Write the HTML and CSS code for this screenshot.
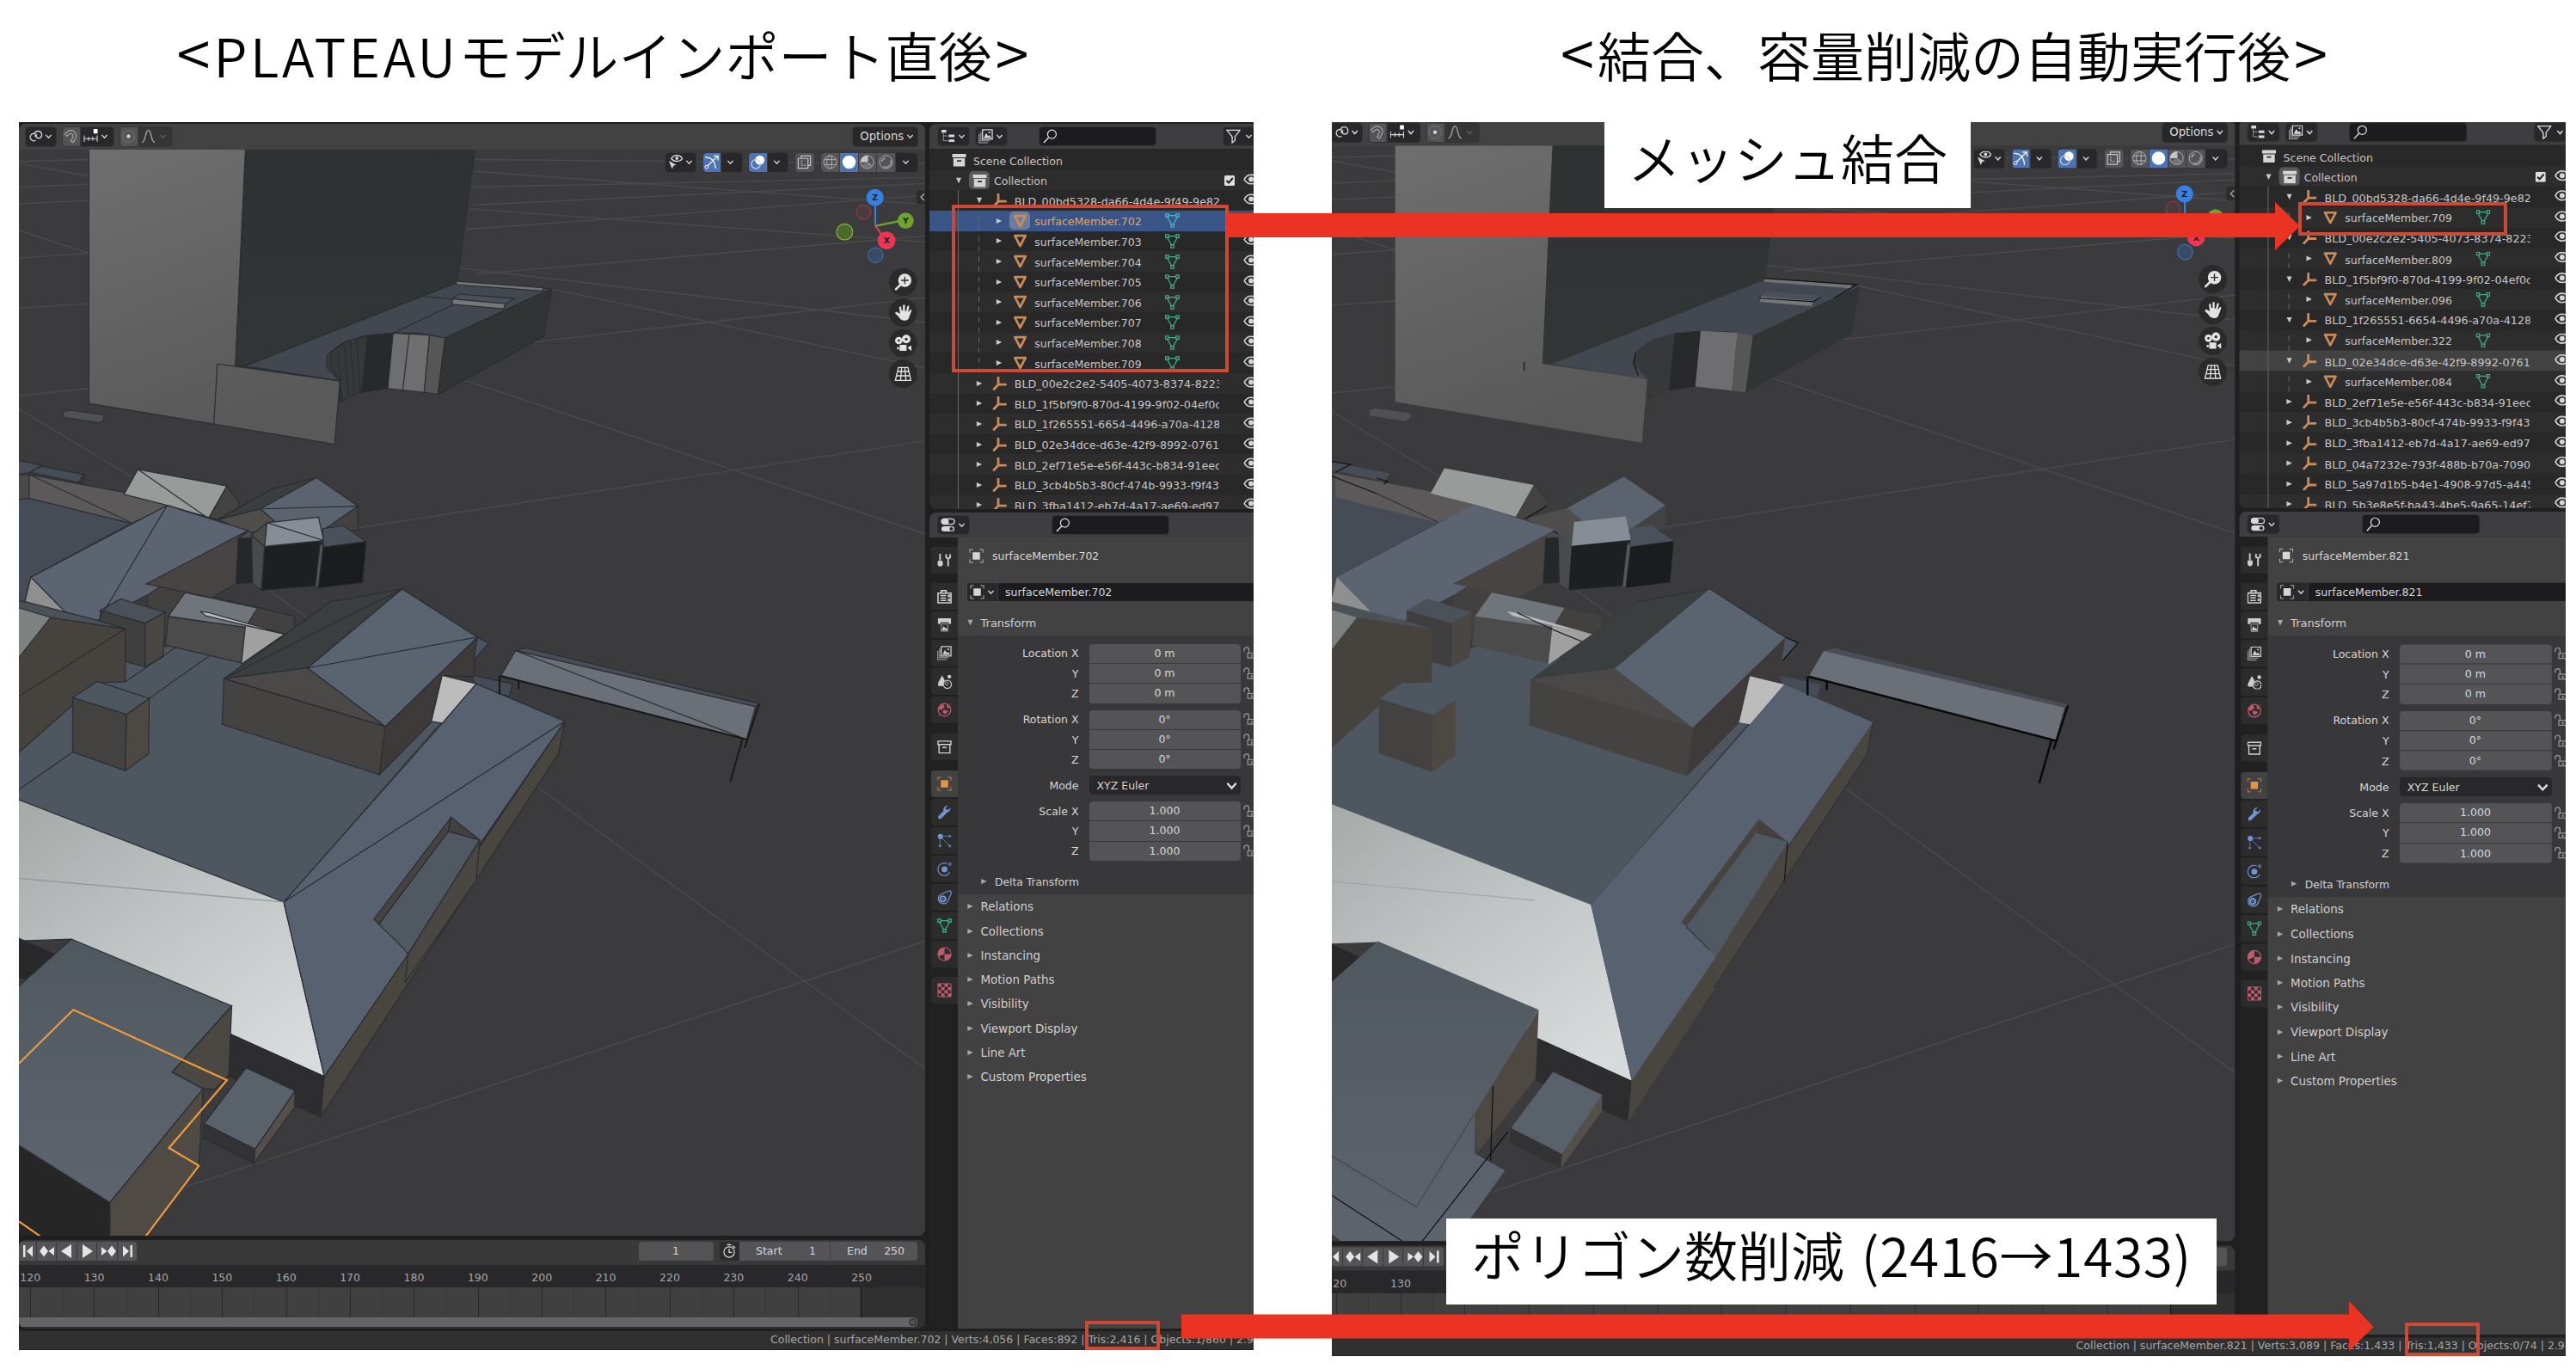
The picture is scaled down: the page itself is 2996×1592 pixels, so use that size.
FILE: index.html
```html
<!DOCTYPE html>
<html lang="ja">
<head>
<meta charset="utf-8">
<title>PLATEAUモデル 結合・容量削減</title>
<link rel="stylesheet" href="styles.css">
</head>
<body>
<svg class="defs" aria-hidden="true">
  <defs>
    <linearGradient id="gTower" x1="0" y1="0" x2="0.3" y2="1"><stop offset="0" stop-color="#6f6f70"/><stop offset="1" stop-color="#595959"/></linearGradient>
    <linearGradient id="gDark" x1="0" y1="0" x2="0" y2="1"><stop offset="0" stop-color="#2d3132"/><stop offset="1" stop-color="#323637"/></linearGradient>
    <linearGradient id="gWhite" x1="0" y1="0" x2="0.8" y2="1"><stop offset="0" stop-color="#a3a7a6"/><stop offset="0.5" stop-color="#bfc3c3"/><stop offset="1" stop-color="#d8dbdc"/></linearGradient>
    <linearGradient id="gBld" x1="0" y1="0" x2="0" y2="1"><stop offset="0" stop-color="#50585f"/><stop offset="1" stop-color="#5d646e"/></linearGradient>

    <symbol id="chev" viewBox="0 0 10 10"><path d="M1.5 3.2 5 7l3.500-3.800" fill="none" stroke="currentColor" stroke-width="1.600"/></symbol>
    <symbol id="right" viewBox="0 0 10 10"><path d="M1 1.200 9 5 1 8.800z" fill="currentColor"/></symbol>
    <symbol id="down" viewBox="0 0 10 10"><path d="M1.200 1h7.600L5 9z" fill="currentColor"/></symbol>
    <symbol id="box" viewBox="0 0 16 16"><path d="M0 1h16v4H0zM1.300 6h13.400v9.500H1.300z" fill="currentColor"/><path d="M5.500 8.200h5v1.800h-5z" fill="#2b2b2b"/></symbol>
    <symbol id="empty" viewBox="0 0 16 16"><path d="M6.500 1v8.200H15M6.500 9.200 1.500 14.500" fill="none" stroke="#c98b57" stroke-width="2.800" stroke-linecap="round"/></symbol>
    <symbol id="mesh" viewBox="0 0 16 16"><path d="M1.800 2.200h12.400L8 14z" fill="none" stroke="#c98b57" stroke-width="2.700" stroke-linejoin="round"/></symbol>
    <symbol id="data" viewBox="0 0 16 16"><path d="M4 2.500h8M2.500 4l4.500 8M13.500 4 9 12M.7.800h3.200V4H.7zM12.100.800h3.200V4h-3.200zM6.400 12h3.200v3.200H6.400z" fill="none" stroke="currentColor" stroke-width="1.200"/></symbol>
    <symbol id="eye" viewBox="0 0 16 12"><path d="M.8 6C4-.5 12-.5 15.200 6 12 12.500 4 12.500.8 6z" fill="none" stroke="currentColor" stroke-width="1.500"/><circle cx="8" cy="6" r="2.700" fill="currentColor"/></symbol>
    <symbol id="check" viewBox="0 0 12 12"><rect width="12" height="12" rx="1.500" fill="#dedede"/><path d="M2.500 6 5 8.600 9.800 3" fill="none" stroke="#1c1c1c" stroke-width="2"/></symbol>
    <symbol id="tree" viewBox="0 0 18 18"><path d="M1 1h6v3.500H1zM10 7h7v3h-7zM10 13h7v3h-7z" fill="currentColor"/><path d="M3.500 5v9.500H9M3.500 8.500H9" fill="none" stroke="#9a9a9a"/></symbol>
    <symbol id="layers" viewBox="0 0 18 18"><path d="M5 1h12v11.500H5z" fill="none" stroke="currentColor" stroke-width="1.400"/><path d="M6.500 11l3-6 2.500 4 1.500-1.500 2.500 3.500zM12.500 3.200h2v2h-2z" fill="currentColor"/><path d="M3 3.500v11h11M.8 6v11h11" fill="none" stroke="#a8a8a8" stroke-width="1.200"/></symbol>
    <symbol id="search" viewBox="0 0 18 18"><circle cx="11" cy="6.500" r="5.300" fill="none" stroke="currentColor" stroke-width="1.300"/><path d="M7 10.500 1 17" stroke="currentColor" stroke-width="1.500"/></symbol>
    <symbol id="funnel" viewBox="0 0 18 18"><path d="M1 1.500h16L11 9.500v4.500l-3.500 3V9.500z" fill="none" stroke="currentColor" stroke-width="1.400"/></symbol>
    <symbol id="props" viewBox="0 0 18 18"><rect x="1" y="1.500" width="16" height="6.500" rx="3.200" fill="none" stroke="currentColor" stroke-width="1.300"/><rect x="1" y="1.500" width="9" height="6.500" rx="3" fill="currentColor"/><rect x="1" y="10.500" width="16" height="6.500" rx="3.200" fill="currentColor"/><rect x="11" y="11.700" width="4.500" height="4.200" rx="2" fill="#2b2b2b"/></symbol>
    <symbol id="object" viewBox="0 0 18 18"><path d="M4.500 4.500h9v9h-9z" fill="currentColor"/><path d="M1 5V1h4M13 1h4v4M17 13v4h-4M5 17H1v-4" fill="none" stroke="currentColor" stroke-width="1.100" opacity=".75"/></symbol>
    <symbol id="lock" viewBox="0 0 16 16"><path d="M1 6V4a3 3 0 0 1 6 0v4" fill="none" stroke="currentColor" stroke-width="1.300"/><path d="M5.500 8h10v6h-10z" fill="none" stroke="currentColor" stroke-width="1.300"/><path d="M9.500 10h2v2.500h-2z" fill="currentColor"/></symbol>

    <symbol id="pivot" viewBox="0 0 18 18"><path d="M10.500 8.500A4.500 4.500 0 1 0 9 15M7.500 7.500A4.500 4.500 0 1 1 13 12.500 4.500 4.500 0 0 1 9 9.500" transform="translate(0 -1)" fill="none" stroke="currentColor" stroke-width="1.400"/><circle cx="9" cy="8.500" r="1.400" fill="currentColor"/></symbol>
    <symbol id="magnet" viewBox="0 0 18 18"><path d="M1.500 6 6 2.500C12 0 17 5 15 10.500L12 16.500 9 15l2.500-5.500C12.500 6.500 10 5 7 6L4 9z" fill="none" stroke="currentColor" stroke-width="1.200"/></symbol>
    <symbol id="snap" viewBox="0 0 18 18"><path d="M1 8v8M17 8v8M6.500 9.500v5M11.500 9.500v5M1 12h16" stroke="currentColor" stroke-width="1.100"/><path d="M12.500 0h5v5.500h-5z" fill="#fff"/></symbol>
    <symbol id="prop" viewBox="0 0 18 18"><circle cx="9" cy="9" r="7.500" fill="none" stroke="#777"/><circle cx="9" cy="9" r="2.300" fill="#cfcfcf"/></symbol>
    <symbol id="bell" viewBox="0 0 18 18"><path d="M1 16.500c5 0 4-15 8-15s3 15 8 15" fill="none" stroke="#aaa" stroke-width="1.400"/></symbol>
    <symbol id="pickeye" viewBox="0 0 18 18"><path d="M4 4.500C7-.5 15-.5 17.500 4.500 15 9 7 9 4 4.500z" fill="none" stroke="currentColor" stroke-width="1.500"/><circle cx="10.800" cy="4.300" r="2" fill="currentColor"/><path d="M1 7.500 10 12.500 6.500 13.500 5 17.500z" fill="currentColor"/></symbol>
    <symbol id="giz" viewBox="0 0 18 18"><path d="M1 3c8 0 12.500 5 13 14M4 14 16 2M11.500 1.500H17V7" fill="none" stroke="#fff" stroke-width="1.300"/><circle cx="3" cy="15" r="2" fill="#4f74b4" stroke="#fff"/></symbol>
    <symbol id="over" viewBox="0 0 18 18"><circle cx="11.300" cy="6.500" r="5.700" fill="#fff"/><circle cx="6.500" cy="11.500" r="5.500" fill="none" stroke="#c4d3ee" stroke-width="1.300"/></symbol>
    <symbol id="xray" viewBox="0 0 18 18"><path d="M1.500 4.500h12v12h-12zM5 4V1.500h11.500V13H14" fill="none" stroke="#c4c4c4" stroke-width="1.300"/><path d="M5.500 7v6h5" fill="none" stroke="#c4c4c4" stroke-dasharray="2 1"/></symbol>
    <symbol id="sWire" viewBox="0 0 18 18"><circle cx="9" cy="9" r="8" fill="none" stroke="#b5b5b5"/><path d="M11 1v16M1.500 6h15M1.500 12h15M9 1C3.500 5 3.500 13 9 17" fill="none" stroke="#b5b5b5"/></symbol>
    <symbol id="sSolid" viewBox="0 0 18 18"><circle cx="9" cy="9" r="8.200" fill="#fff"/></symbol>
    <symbol id="sMat" viewBox="0 0 18 18"><circle cx="9" cy="9" r="8" fill="none" stroke="#b5b5b5"/><path d="M10 1v8l5.500 5A8 8 0 0 1 10 9H1A8 8 0 0 1 10 1z" fill="#c4c4c4"/><path d="M9 9 15 15A8 8 0 0 1 2 13z" fill="#8a8a8a" opacity=".6"/></symbol>
    <symbol id="sRend" viewBox="0 0 18 18"><circle cx="9" cy="9" r="8" fill="none" stroke="#b5b5b5"/><path d="M14.500 7A6 6 0 0 1 6 14.500" fill="none" stroke="#a8a8a8" stroke-width="2" stroke-dasharray="1.500 .7"/><path d="M4 8.500a5 5 0 0 1 4-4.500" stroke="#ddd" fill="none"/></symbol>
    <symbol id="clock" viewBox="0 0 18 18"><circle cx="8.500" cy="10.500" r="6.500" fill="none" stroke="currentColor" stroke-width="1.300"/><path d="M8.500 6.500v4.500H12M6 1.500h5M13 3l3 2.500" fill="none" stroke="currentColor" stroke-width="1.500"/></symbol>

    <symbol id="tTool" viewBox="0 0 18 18"><path d="M3.500 1v8M11 1.500v4l2.500 1.500L16 5.500v-4M13.500 7v9.500" fill="none" stroke="currentColor" stroke-width="2"/><path d="M1 9.500h5.500L7 14a3.300 3.300 0 0 1-6.500 0z" fill="currentColor"/></symbol>
    <symbol id="tRender" viewBox="0 0 18 18"><path d="M1 5h16v12H1zM5 5V2h6v3" fill="none" stroke="currentColor" stroke-width="1.700"/><path d="M4 8h7M4 11h7M4 14h7" stroke="currentColor" stroke-width="1.600"/><path d="M13 7h3v3h-3zM13 12h3v3h-3z" fill="currentColor"/></symbol>
    <symbol id="tOut" viewBox="0 0 18 18"><path d="M1 1h16v7h-3V6H4v2H1z" fill="currentColor"/><path d="M5 8h8v9H5z" fill="none" stroke="#aaa"/><path d="M5.500 16 8 10.500l2 3 1-1 2 3.500z" fill="currentColor"/></symbol>
    <symbol id="tScene" viewBox="0 0 18 18"><path d="M6 1.500 9 7v7.500H1.500Q0 12 2 9z" fill="currentColor"/><circle cx="15" cy="3" r="2.300" fill="currentColor"/><circle cx="12.500" cy="12.500" r="5" fill="#2b2b2b" stroke="currentColor" stroke-width="1.300"/><circle cx="11.500" cy="11.500" r="2" fill="none" stroke="currentColor" stroke-width=".8"/></symbol>
    <symbol id="tWorld" viewBox="0 0 18 18"><circle cx="9" cy="9" r="7.700" fill="none" stroke="currentColor" stroke-width="1.300"/><path d="M3 4.500 7 2l2 3-3 3-1 1-3-1zM8 9l5 1.500-1.500 2.500-2 1-2.500-2zM12 3l3.500 3-3 1zM1 17l2-2M15 3l2-2" fill="currentColor" stroke="currentColor" stroke-width=".7"/></symbol>
    <symbol id="tColl" viewBox="0 0 18 18"><path d="M1 2h16v4H1zM2.300 6h13.400v10.500H2.300z" fill="none" stroke="currentColor" stroke-width="1.500"/><path d="M6.500 9h5v1.700h-5z" fill="currentColor"/></symbol>
    <symbol id="tMod" viewBox="0 0 18 18"><path d="M3.500 15 11 7.500" stroke="currentColor" stroke-width="4.500" stroke-linecap="round"/><path d="M16.500 3.500 13 7l-2.500-.5L10 4l3.500-3.200A5.500 5.500 0 0 0 8 8.500 5.500 5.500 0 0 0 16.500 3.500z" fill="currentColor"/></symbol>
    <symbol id="tPart" viewBox="0 0 18 18"><circle cx="4" cy="4" r="3.300" fill="currentColor"/><path d="M8 3.500h6M3.500 8v6M7 7l8 8" stroke="currentColor" stroke-width="1" opacity=".8"/><g fill="currentColor" opacity=".75"><circle cx="15.500" cy="3.500" r="1.700"/><circle cx="3.500" cy="15.500" r="1.700"/><circle cx="15.500" cy="15.500" r="1.700"/></g></symbol>
    <symbol id="tPhys" viewBox="0 0 18 18"><circle cx="9" cy="9.500" r="3.600" fill="currentColor"/><path d="M12 2.500A7.700 7.700 0 1 0 15.500 13" fill="none" stroke="currentColor" stroke-width="1.200"/><circle cx="15.500" cy="3" r="2.300" fill="currentColor" opacity=".6"/></symbol>
    <symbol id="tCons" viewBox="0 0 18 18"><path d="M4 5.500 14 1.300A2.300 2.300 0 0 1 17 4.500L13 14A6.300 6.300 0 1 1 4 5.500z" fill="none" stroke="currentColor" stroke-width="1.300"/><circle cx="7" cy="11" r="3.300" fill="none" stroke="currentColor" stroke-width="2.300"/><circle cx="7" cy="11" r="1" fill="currentColor"/></symbol>
    <symbol id="tMat" viewBox="0 0 18 18"><circle cx="9" cy="9" r="8" fill="none" stroke="currentColor" stroke-width="1.200"/><path d="M9 1v8L1.500 12A8 8 0 0 1 9 1zM9 9h8a8 8 0 0 1-8 8z" fill="currentColor"/></symbol>
    <symbol id="tTex" viewBox="0 0 18 18"><path d="M1 1h16v16H1z" fill="none" stroke="currentColor"/><path d="M1 1h4v4H1zM9 1h4v4H9zM5 5h4v4H5zM13 5h4v4h-4zM1 9h4v4H1zM9 9h4v4H9zM5 13h4v4H5zM13 13h4v4h-4z" fill="currentColor"/></symbol>

    <g id="play">
      <path d="M5 1h2.500v14H5zM16 1.500v13L9 8zM29 1.500 34 8l-5 6.500L24 8zM41 3v10L34.500 8zM61 0v16L49 8zM74 0v16l12-8zM108 1.500 113 8l-5 6.500-5-6.500zM96 3v10l6.500-5zM129.500 1h2.500v14h-2.500zM121 1.500v13l7-6.500z"/>
    </g>

    <g id="nav">
      <path d="M924 244h36v49h-36q-6 0-6-8v-33q0-8 6-8z" fill="#2c2c2d"/><path d="M945 256 933 268 945 280" fill="none" stroke="#aaa" stroke-width="4"/>
      <circle cx="733" cy="320" r="25" fill="#4a3b3e" stroke="#a23c4b" stroke-width="3"/>
      <path d="M774 368V290" stroke="#3d80d8" stroke-width="6"/><path d="M776 368 860 351" stroke="#6fa331" stroke-width="7"/><path d="M774 368 805 410" stroke="#e0405a" stroke-width="6"/>
      <circle cx="773" cy="269" r="30" fill="#3580e0"/><circle cx="880" cy="350" r="28" fill="#6ea32d"/><circle cx="813" cy="419" r="31" fill="#ee3553"/>
      <circle cx="667" cy="389" r="28" fill="#4b6a2a" stroke="#87b43a" stroke-width="3.500"/><circle cx="775" cy="470" r="26" fill="#374b66" stroke="#3a6fae" stroke-width="3.500"/>
      <g fill="#2a2a2b"><circle cx="871" cy="564" r="49"/><circle cx="871" cy="671" r="49"/><circle cx="871" cy="777" r="49"/><circle cx="871" cy="884" r="49"/></g>
      <circle cx="877" cy="558" r="23" fill="#e3e3e3"/><path d="M861 574 846 589" stroke="#e3e3e3" stroke-width="8" stroke-linecap="round"/><path d="M877 545v26M864 558h26" stroke="#2a2a2b" stroke-width="4"/>
      <path d="M864 674 861 652M874 672V646M883 674 889 650M890 680 897 664M862 680 848 672" stroke="#e3e3e3" stroke-width="7" stroke-linecap="round"/><path d="M846 668q-4 4 0 8 10 8 16 18 18 10 28-2 6-14 6-24l-34-6-2 14z" fill="#e3e3e3"/>
      <g fill="#e3e3e3"><circle cx="856" cy="768" r="13"/><circle cx="882" cy="763" r="15"/><path d="M859 783h24v21h-24zM886 793 900 785v20zM850 791h7v8h-7z"/></g><circle cx="856" cy="768" r="4" fill="#2a2a2b"/><circle cx="882" cy="763" r="5" fill="#2a2a2b"/>
      <path d="M855 862h33l10 45h-54zM851 876h41M848 891h47M866 862l-4 45M877 862l4 45" fill="none" stroke="#e3e3e3" stroke-width="4"/>
    </g>

    <g id="grid" fill="none" stroke="#4b4b4c">
      <path d="M20 294 149 357M20 498 149 485M20 720 149 700M20 740 32 752 222 925M20 371 149 357M32 130 149 162M32 190 149 183M32 232 149 224M32 125 149 120"/>
      <path d="M780 680 1560 1075M595 1054 1560 830M920 447 1560 652M895 582 1560 468M770 395 1560 535M798 410 1560 312M780 297 1560 210M785 245 1560 330M790 190 1560 165M795 150 1560 235M795 120 1560 130M795 235 1560 180M440 1200 515 1282M898 1708 1560 2436M310 2723 1560 2094"/>
    </g>

    <g id="town">
      <polygon points="411,90 795,90 765,432 410,643 394,641" fill="url(#gDark)"/>
      <polygon points="149,90 411,90 394,643 569,681 560,841 149,738" fill="url(#gTower)"/>
      <polygon points="410,643 765,432 923,447 745,572 700,560 658,560 610,566 570,588 548,615 546,645 569,681" fill="#434850"/>
      <polygon points="569,735 569,681 552,640 556,606 580,580 620,566 658,560 649,700 600,710" fill="#363839"/>
      <polygon points="615,566 658,560 649,700 605,710" fill="#27292a"/>
      <polygon points="658,560 719,565 710,710 649,700" fill="#6e6e70"/>
      <polygon points="719,565 745,572 733,715 710,710" fill="#565657"/>
      <polygon points="745,572 923,447 910,568 733,715" fill="#303435"/>
      <polygon points="762,428 910,445 907,453 765,437" fill="#727375"/>
      <polygon points="757,473 768,461 861,472 846,487" fill="#4a5059"/>
      <polygon points="757,473 846,485 843,498 757,487" fill="#777779"/>
      <polygon points="106,760 117,755 175,767 173,781 165,787 106,773" fill="#505154"/>

      <polygon points="20,1742 20,1560 122,1440 290,1350 640,1430 800,1459 735,1550 475,2001 32,1742" fill="#4e565f" stroke="none"/>
      <polygon points="20,878 70,895 51,912 20,922" fill="#474d57"/>
      <polygon points="51,912 70,897 141,918 132,938" fill="#474d57"/>
      <polygon points="132,938 141,918 141,948" fill="#383838"/>
      <polygon points="20,918 49,918 49,980 20,990" fill="#4b4a4a"/>
      <polygon points="49,918 225,968 285,996 220,1042 49,980" fill="#5b5959"/>
      <polygon points="20,985 49,978 220,1042 52,1178 42,1240 20,1240" fill="#454c56"/>
      <polygon points="231,905 380,947 350,1027 280,996 208,968" fill="#979b9a"/>
      <polygon points="380,947 401,990 398,1003 366,1032 350,1027" fill="#444342"/>
      <polygon points="366,1032 455,955 530,926 436,1005" fill="#3a3e3f"/>
      <polygon points="366,1032 436,1005 470,1050 415,1068" fill="#504e4d"/>
      <polygon points="599,998 599,1060 540,1055" fill="#434243"/>
      <polygon points="530,926 599,998 540,1060 470,1050 436,1005" fill="#5a636e"/>
      <polygon points="399,1080 415,1062 440,1070 428,1080" fill="#474d55"/>
      <polygon points="399,1080 428,1078 425,1195 395,1195" fill="#25282a"/>
      <polygon points="355,1230 395,1195 425,1192 440,1211 515,1282 493,1310 440,1270" fill="#3b3b3d" stroke="none"/>
      <polygon points="245,1193 320,1215 493,1277 493,1310 440,1360 250,1330" fill="#434140"/>
      <polygon points="280,996 415,1060 250,1220 165,1288 120,1283 52,1178" fill="#5b6470"/>
      <polygon points="415,1060 399,1080 395,1195 355,1230 245,1195" fill="#474443"/>
      <polygon points="52,1178 120,1283 42,1240" fill="#8f8f90"/>
      <polygon points="421,1070 443,1100 438,1211 423,1195" fill="#4a4a4b"/>
      <polygon points="447,1040 443,1100 421,1072" fill="#4c4c4d"/>
      <polygon points="443,1100 540,1086 530,1200 438,1211" fill="#1c2022"/>
      <polygon points="447,1040 533,1026 542,1085 443,1100" fill="#868d94"/>
      <polygon points="541,1088 540,1055 575,1048 613,1088 541,1102" fill="#4a515a"/>
      <polygon points="536,1090 541,1102 533,1205 528,1200" fill="#555557"/>
      <polygon points="541,1102 613,1088 607,1192 533,1205" fill="#1a1d1e"/>
      <polygon points="282,1278 411,1305 404,1395 277,1350" fill="#4b4b4b"/>
      <polygon points="310,1217 431,1256 411,1305 282,1277" fill="#6f757a"/>
      <polygon points="411,1300 477,1322 404,1398" fill="#a0a0a0"/>
      <polygon points="335,1265 350,1268 477,1322 411,1300 345,1276" fill="#b9b9ba"/>
      <polygon points="202,1233 277,1267 243,1295 168,1262" fill="#4a5159"/>
      <polygon points="168,1262 243,1295 243,1405 168,1375" fill="#403f40"/>
      <polygon points="243,1295 277,1267 273,1380 243,1405" fill="#494643"/>
      <polygon points="85,1280 210,1309 210,1443 165,1445 20,1638 20,1380" fill="#46433f"/>
      <polygon points="20,1235 42,1240 165,1288 210,1309 85,1280 20,1255" fill="#4b5157"/>
      <polygon points="20,1250 85,1280 20,1405" fill="#7d8281"/>
      <polygon points="20,1735 32,1742 475,2001 543,2443 390,2339 120,2095 20,2100" fill="url(#gWhite)"/>
      <polygon points="20,2085 92,2133 45,2196 20,2190" fill="#29292b"/>
      <polygon points="387,2336 543,2443 537,2546 380,2440" fill="#2d2d2f"/>
      <polygon points="788,1425 858,1448 852,1480 797,1455" fill="#454c55"/>
      <polygon points="945,1543 935,1624 537,2546 543,2443" fill="#494640"/>
      <polygon points="797,1448 945,1543 805,1850 683,2133 543,2443 475,2001 740,1548" fill="#586170"/>
      <polygon points="755,1786 803,1844 750,1822" fill="#43403e"/>
      <polygon points="750,1822 803,1844 683,2133 673,2115 634,2057" fill="#505962"/>
      <polygon points="755,1786 750,1822 634,2057 626,2044" fill="#474340"/>
      <polygon points="803,1844 797,1946 678,2205 683,2133" fill="#4a4742"/>
      <polygon points="375,1435 645,1556 635,1678 372,1551" fill="#454342"/>
      <polygon points="645,1556 799,1330 793,1430 740,1427 722,1545 635,1678" fill="#3d3a39"/>
      <polygon points="799,1330 818,1345 793,1388" fill="#4b5461"/>
      <polygon points="740,1427 797,1448 740,1548 722,1543" fill="#bcbcbd"/>
      <polygon points="375,1435 553,1240 673,1208 515,1408" fill="#3a3e3f"/>
      <polygon points="375,1435 515,1408 645,1556" fill="#4a4948"/>
      <polygon points="673,1208 799,1330 645,1556 515,1408" fill="#5a6370"/>
      <polygon points="122,1483 212,1525 210,1668 122,1621" fill="#434241"/>
      <polygon points="212,1525 250,1485 249,1625 210,1668" fill="#4d4842"/>
      <polygon points="163,1442 250,1485 212,1525 122,1483" fill="#4e5660"/>
      <polygon points="342,2562 427,2627 425,2663 340,2599" fill="#333335"/>
      <polygon points="494,2479 493,2521 425,2663 427,2627" fill="#544f48"/>
      <polygon points="412,2421 494,2479 427,2627 342,2562" fill="#59616a"/>
      <polygon points="863,1364 880,1357 1272,1499 1264,1506" fill="#484d56"/>
      <polygon points="863,1364 1264,1506 1249,1589 838,1428" fill="#6b7078"/>
    </g>
  </defs>
</svg>

<main class="slide">
  <figure class="shot shot-before">
    <h2 class="title"><span class="ang open-a">&lt;</span><span class="lat">PLATEAU</span>モデルインポート直後<span class="ang close-a">&gt;</span></h2>
    <div class="clip">
      <div class="app">
        <div class="work">
          <div class="left">
            <section class="viewport">
              <header class="bar">
                <div class="btns">
                  <span class="btn w35"><svg class="i18"><use href="#pivot"/></svg><svg class="i10"><use href="#chev"/></svg></span>
                  <span class="btn w59"><span class="cell lit"><svg class="i18"><use href="#magnet"/></svg></span><svg class="i18"><use href="#snap"/></svg><svg class="i10"><use href="#chev"/></svg></span>
                  <span class="btn w60 dim"><span class="cell lit"><svg class="i18"><use href="#prop"/></svg></span><svg class="i18"><use href="#bell"/></svg><svg class="i10 faint"><use href="#chev"/></svg></span>
                </div>
                <span class="btn options">Options<svg class="i10"><use href="#chev"/></svg></span>
              </header>
              <div class="canvas">
                <svg class="scene wire" viewBox="32 95 1516 2752" preserveAspectRatio="none">
                  <use href="#grid"/><use href="#town"/>
                  <g fill="none">
                    <path d="M364 638 358 790M569 681 364 638M710 467 758 474M658 560 758 488M566 602 572 732M576 590 584 722M586 580 594 716M597 573 603 711M685 562 674 704M49 918 220 1040M231 905 345 1025M280 996 165 1288M436 1005 599 998M447 1040 542 1085M375 1435 673 1208M515 1408 799 1330M375 1435 645 1556M863 1364 1249 1589M475 2001 945 1543M32 1716 122 1621M250 1485 350 1378M32 1480 210 1309M210 1443 295 1355"/>
                    <path d="M32 1941 475 2001" stroke="#90949a"/>
                    <path d="M836 1428V1475M868 1440V1462M1243 1585 1222 1696M1270 1500 1246 1611M838 1428 1249 1589" stroke="#16181a" stroke-width="2"/>
                  </g>
                  <polygon points="388,2264 383,2439 360,2475 340,2474 288,2432" fill="#4b4742"/>
                  <polygon points="340,2474 333,2669 245,2850 184,2850 184,2762" fill="#4f4b44"/>
                  <polygon points="32,2618 184,2762 184,2850 32,2850" fill="#262627"/>
                  <polygon points="20,2230 120,2095 388,2264 288,2432 340,2474 184,2762 20,2606" fill="url(#gBld)"/>
                  <path class="select" d="M32 2410 123 2274 380 2452 283 2624 333 2669 243 2850M32 2810 70 2850"/>
                </svg>
                <div class="tools">
                  <span class="btn w35"><svg class="i18"><use href="#pickeye"/></svg><svg class="i10"><use href="#chev"/></svg></span>
                  <span class="btn w45"><span class="cell on"><svg class="i18"><use href="#giz"/></svg></span><svg class="i10"><use href="#chev"/></svg></span>
                  <span class="btn w45"><span class="cell on"><svg class="i18"><use href="#over"/></svg></span><svg class="i10"><use href="#chev"/></svg></span>
                  <span class="btn w22 lit"><svg class="i18"><use href="#xray"/></svg></span>
                  <span class="btn w112"><span class="cell lit"><svg class="i18"><use href="#sWire"/></svg></span><span class="cell on"><svg class="i18"><use href="#sSolid"/></svg></span><span class="cell lit"><svg class="i18"><use href="#sMat"/></svg></span><span class="cell lit"><svg class="i18"><use href="#sRend"/></svg></span><svg class="i10"><use href="#chev"/></svg></span>
                </div>
                <svg class="gizmo" viewBox="0 0 960 960"><use href="#nav"/><g class="axis"><text x="773" y="279">Z</text><text x="880" y="360">Y</text><text x="814" y="430">X</text></g></svg>
              </div>
            </section>
            <section class="timeline">
              <header class="tbar">
                <div class="play"><svg viewBox="0 0 138 21.5"><use href="#play" y="3"/></svg></div>
                <span class="frame">1</span>
                <span class="range"><span class="clock"><svg class="i18"><use href="#clock"/></svg></span><span class="num start"><b>Start</b><b>1</b></span><span class="num end"><b>End</b><b>250</b></span></span>
              </header>
              <div class="ruler"><span>120</span><span>130</span><span>140</span><span>150</span><span>160</span><span>170</span><span>180</span><span>190</span><span>200</span><span>210</span><span>220</span><span>230</span><span>240</span><span>250</span></div>
              <div class="track"><div class="frames"></div><div class="scroll"><i></i></div></div>
            </section>
          </div>
          <div class="right">
            <section class="outliner">
              <header class="obar"><span class="btn w36"><svg class="i18"><use href="#tree"/></svg><svg class="i10"><use href="#chev"/></svg></span><span class="btn w36"><svg class="i18"><use href="#layers"/></svg><svg class="i10"><use href="#chev"/></svg></span><span class="find"><svg class="i18"><use href="#search"/></svg></span><span class="btn funnel"><svg class="i18"><use href="#funnel"/></svg><svg class="i10"><use href="#chev"/></svg></span></header>
              <ul class="rows">
                <li><svg class="ic"><use href="#box"/></svg><em>Scene Collection</em></li>
                <li><svg class="tri"><use href="#down"/></svg><span class="halo"><svg class="ic"><use href="#box"/></svg></span><em>Collection</em><svg class="chk"><use href="#check"/></svg><svg class="eye"><use href="#eye"/></svg></li>
                <li class="l2"><svg class="tri"><use href="#down"/></svg><svg class="ic"><use href="#empty"/></svg><em>BLD_00bd5328-da66-4d4e-9f49-9e82</em><svg class="eye"><use href="#eye"/></svg></li>
                <li class="l3 sel"><svg class="tri"><use href="#right"/></svg><span class="halo"><svg class="ic"><use href="#mesh"/></svg></span><em>surfaceMember.702</em><svg class="dat"><use href="#data"/></svg><svg class="eye"><use href="#eye"/></svg></li>
                <li class="l3"><svg class="tri"><use href="#right"/></svg><svg class="ic"><use href="#mesh"/></svg><em>surfaceMember.703</em><svg class="dat"><use href="#data"/></svg><svg class="eye"><use href="#eye"/></svg></li>
                <li class="l3"><svg class="tri"><use href="#right"/></svg><svg class="ic"><use href="#mesh"/></svg><em>surfaceMember.704</em><svg class="dat"><use href="#data"/></svg><svg class="eye"><use href="#eye"/></svg></li>
                <li class="l3"><svg class="tri"><use href="#right"/></svg><svg class="ic"><use href="#mesh"/></svg><em>surfaceMember.705</em><svg class="dat"><use href="#data"/></svg><svg class="eye"><use href="#eye"/></svg></li>
                <li class="l3"><svg class="tri"><use href="#right"/></svg><svg class="ic"><use href="#mesh"/></svg><em>surfaceMember.706</em><svg class="dat"><use href="#data"/></svg><svg class="eye"><use href="#eye"/></svg></li>
                <li class="l3"><svg class="tri"><use href="#right"/></svg><svg class="ic"><use href="#mesh"/></svg><em>surfaceMember.707</em><svg class="dat"><use href="#data"/></svg><svg class="eye"><use href="#eye"/></svg></li>
                <li class="l3"><svg class="tri"><use href="#right"/></svg><svg class="ic"><use href="#mesh"/></svg><em>surfaceMember.708</em><svg class="dat"><use href="#data"/></svg><svg class="eye"><use href="#eye"/></svg></li>
                <li class="l3"><svg class="tri"><use href="#right"/></svg><svg class="ic"><use href="#mesh"/></svg><em>surfaceMember.709</em><svg class="dat"><use href="#data"/></svg><svg class="eye"><use href="#eye"/></svg></li>
                <li class="l2"><svg class="tri"><use href="#right"/></svg><svg class="ic"><use href="#empty"/></svg><em>BLD_00e2c2e2-5405-4073-8374-8223</em><svg class="eye"><use href="#eye"/></svg></li>
                <li class="l2"><svg class="tri"><use href="#right"/></svg><svg class="ic"><use href="#empty"/></svg><em>BLD_1f5bf9f0-870d-4199-9f02-04ef0c</em><svg class="eye"><use href="#eye"/></svg></li>
                <li class="l2"><svg class="tri"><use href="#right"/></svg><svg class="ic"><use href="#empty"/></svg><em>BLD_1f265551-6654-4496-a70a-4128</em><svg class="eye"><use href="#eye"/></svg></li>
                <li class="l2"><svg class="tri"><use href="#right"/></svg><svg class="ic"><use href="#empty"/></svg><em>BLD_02e34dce-d63e-42f9-8992-0761</em><svg class="eye"><use href="#eye"/></svg></li>
                <li class="l2"><svg class="tri"><use href="#right"/></svg><svg class="ic"><use href="#empty"/></svg><em>BLD_2ef71e5e-e56f-443c-b834-91eec</em><svg class="eye"><use href="#eye"/></svg></li>
                <li class="l2"><svg class="tri"><use href="#right"/></svg><svg class="ic"><use href="#empty"/></svg><em>BLD_3cb4b5b3-80cf-474b-9933-f9f43</em><svg class="eye"><use href="#eye"/></svg></li>
                <li class="l2"><svg class="tri"><use href="#right"/></svg><svg class="ic"><use href="#empty"/></svg><em>BLD_3fba1412-eb7d-4a17-ae69-ed97</em><svg class="eye"><use href="#eye"/></svg></li>
              </ul>
            </section>
            <section class="props">
              <header class="obar pbar"><span class="btn w36"><svg class="i18"><use href="#props"/></svg><svg class="i10"><use href="#chev"/></svg></span><span class="find pfind"><svg class="i18"><use href="#search"/></svg></span></header>
              <div class="pmain">
                <nav class="tabs">
                  <span><svg><use href="#tTool"/></svg></span>
                  <span class="gap"><svg><use href="#tRender"/></svg></span>
                  <span><svg><use href="#tOut"/></svg></span>
                  <span><svg><use href="#layers"/></svg></span>
                  <span><svg><use href="#tScene"/></svg></span>
                  <span class="red"><svg><use href="#tWorld"/></svg></span>
                  <span class="gap2"><svg><use href="#tColl"/></svg></span>
                  <span class="gap2 act orange"><svg><use href="#object"/></svg></span>
                  <span class="blue"><svg><use href="#tMod"/></svg></span>
                  <span class="blue"><svg><use href="#tPart"/></svg></span>
                  <span class="blue"><svg><use href="#tPhys"/></svg></span>
                  <span class="blue"><svg><use href="#tCons"/></svg></span>
                  <span class="green"><svg><use href="#data"/></svg></span>
                  <span class="red"><svg><use href="#tMat"/></svg></span>
                  <span class="gap red"><svg><use href="#tTex"/></svg></span>
                </nav>
                <div class="panel">
                  <div class="crumb"><svg><use href="#object"/></svg>surfaceMember.702</div>
                  <div class="name"><span class="pick"><svg class="i18"><use href="#object"/></svg><svg class="i10"><use href="#chev"/></svg></span><span class="val">surfaceMember.702</span></div>
                  <h3 class="sec open"><svg><use href="#down"/></svg>Transform</h3>
                  <div class="xform">
                    <div class="grp"><label>Location X</label><b>0 m</b><svg><use href="#lock"/></svg><label>Y</label><b>0 m</b><svg><use href="#lock"/></svg><label>Z</label><b>0 m</b><svg><use href="#lock"/></svg></div>
                    <div class="grp"><label>Rotation X</label><b>0°</b><svg><use href="#lock"/></svg><label>Y</label><b>0°</b><svg><use href="#lock"/></svg><label>Z</label><b>0°</b><svg><use href="#lock"/></svg></div>
                    <div class="grp mode"><label>Mode</label><span class="menu">XYZ Euler<svg class="i10"><use href="#chev"/></svg></span></div>
                    <div class="grp"><label>Scale X</label><b>1.000</b><svg><use href="#lock"/></svg><label>Y</label><b>1.000</b><svg><use href="#lock"/></svg><label>Z</label><b>1.000</b><svg><use href="#lock"/></svg></div>
                    <h4 class="sec sub"><svg><use href="#right"/></svg>Delta Transform</h4>
                  </div>
                  <h3 class="sec"><svg><use href="#right"/></svg>Relations</h3>
                  <h3 class="sec"><svg><use href="#right"/></svg>Collections</h3>
                  <h3 class="sec"><svg><use href="#right"/></svg>Instancing</h3>
                  <h3 class="sec"><svg><use href="#right"/></svg>Motion Paths</h3>
                  <h3 class="sec"><svg><use href="#right"/></svg>Visibility</h3>
                  <h3 class="sec"><svg><use href="#right"/></svg>Viewport Display</h3>
                  <h3 class="sec"><svg><use href="#right"/></svg>Line Art</h3>
                  <h3 class="sec"><svg><use href="#right"/></svg>Custom Properties</h3>
                </div>
              </div>
            </section>
          </div>
        </div>
        <footer class="status">Collection | surfaceMember.702 | Verts:4,056 | Faces:892 | Tris:2,416 | Objects:1/860 | 2.9</footer>
      </div>
    </div>
  </figure>

  <figure class="shot shot-after">
    <h2 class="title"><span class="ang open-a">&lt;</span>結合、容量削減の自動実行後<span class="ang close-a">&gt;</span></h2>
    <div class="clip">
      <div class="app">
        <div class="work">
          <div class="left">
            <section class="viewport">
              <header class="bar">
                <div class="btns">
                  <span class="btn w35"><svg class="i18"><use href="#pivot"/></svg><svg class="i10"><use href="#chev"/></svg></span>
                  <span class="btn w59"><span class="cell lit"><svg class="i18"><use href="#magnet"/></svg></span><svg class="i18"><use href="#snap"/></svg><svg class="i10"><use href="#chev"/></svg></span>
                  <span class="btn w60 dim"><span class="cell lit"><svg class="i18"><use href="#prop"/></svg></span><svg class="i18"><use href="#bell"/></svg><svg class="i10 faint"><use href="#chev"/></svg></span>
                </div>
                <span class="btn options">Options<svg class="i10"><use href="#chev"/></svg></span>
              </header>
              <div class="canvas">
                <svg class="scene plain" viewBox="32 95 1516 2752" preserveAspectRatio="none">
                  <use href="#grid"/><use href="#town"/>
                  <g fill="none" stroke="#0e0f10">
                    <path d="M364 638V660M550 615 546 640 554 672M762 428 918 444 880 478M757 473V478L846 487 858 475M20 882 75 896 50 915M118 930 136 938 130 945M412 1062 420 1070M799 1330 820 1343 795 1388M352 1268 411 1310 460 1340M803 1844 797 1946M366 1032 401 1000M32 918 120 970"/>
                    <path d="M634 2057 673 2115M120 970 220 1040M553 1240 673 1208 799 1330M945 1543 935 1624 680 2210" stroke="#2d3136"/>
                    <path d="M32 1941 380 1990" stroke="#9da1a1"/>
                    <path d="M836 1428V1475M868 1440V1462M1243 1585 1222 1696M1270 1500 1246 1611M838 1428 1249 1589" stroke="#090a0b" stroke-width="2.500"/>
                  </g>
                  <polygon points="388,2265 383,2437 285,2626 282,2524" fill="#4e4842"/>
                  <polygon points="20,2225 120,2093 388,2265 282,2524 282,2626 332,2669 245,2850 60,2850 20,2805" fill="url(#gBld)"/>
                  <polygon points="20,2800 62,2850 20,2850" fill="#3c3b3a"/>
                  <path d="M32 2622 184 2760 282 2524" fill="none" stroke="#3e454a"/>
                  <path d="M312 2456 308 2644M32 2720 165 2850M337 2571 192 2850" fill="none" stroke="#0a0a0b"/>
                </svg>
                <div class="tools">
                  <span class="btn w35"><svg class="i18"><use href="#pickeye"/></svg><svg class="i10"><use href="#chev"/></svg></span>
                  <span class="btn w45"><span class="cell on"><svg class="i18"><use href="#giz"/></svg></span><svg class="i10"><use href="#chev"/></svg></span>
                  <span class="btn w45"><span class="cell on"><svg class="i18"><use href="#over"/></svg></span><svg class="i10"><use href="#chev"/></svg></span>
                  <span class="btn w22 lit"><svg class="i18"><use href="#xray"/></svg></span>
                  <span class="btn w112"><span class="cell lit"><svg class="i18"><use href="#sWire"/></svg></span><span class="cell on"><svg class="i18"><use href="#sSolid"/></svg></span><span class="cell lit"><svg class="i18"><use href="#sMat"/></svg></span><span class="cell lit"><svg class="i18"><use href="#sRend"/></svg></span><svg class="i10"><use href="#chev"/></svg></span>
                </div>
                <svg class="gizmo" viewBox="0 0 960 960"><use href="#nav"/><g class="axis"><text x="773" y="279">Z</text><text x="814" y="430">X</text></g></svg>
              </div>
            </section>
            <section class="timeline">
              <header class="tbar">
                <div class="play"><svg viewBox="0 0 138 21.5"><use href="#play" y="3"/></svg></div>
                <span class="range"><span class="num end"></span></span>
              </header>
              <div class="ruler"><span>120</span><span>130</span></div>
              <div class="track"><div class="frames"></div><div class="scroll"><i></i></div></div>
            </section>
          </div>
          <div class="right">
            <section class="outliner">
              <header class="obar"><span class="btn w36"><svg class="i18"><use href="#tree"/></svg><svg class="i10"><use href="#chev"/></svg></span><span class="btn w36"><svg class="i18"><use href="#layers"/></svg><svg class="i10"><use href="#chev"/></svg></span><span class="find"><svg class="i18"><use href="#search"/></svg></span><span class="btn funnel"><svg class="i18"><use href="#funnel"/></svg><svg class="i10"><use href="#chev"/></svg></span></header>
              <ul class="rows">
                <li><svg class="ic"><use href="#box"/></svg><em>Scene Collection</em></li>
                <li><svg class="tri"><use href="#down"/></svg><span class="halo"><svg class="ic"><use href="#box"/></svg></span><em>Collection</em><svg class="chk"><use href="#check"/></svg><svg class="eye"><use href="#eye"/></svg></li>
                <li class="l2"><svg class="tri"><use href="#down"/></svg><svg class="ic"><use href="#empty"/></svg><em>BLD_00bd5328-da66-4d4e-9f49-9e82</em><svg class="eye"><use href="#eye"/></svg></li>
                <li class="l3"><svg class="tri"><use href="#right"/></svg><svg class="ic"><use href="#mesh"/></svg><em>surfaceMember.709</em><svg class="dat"><use href="#data"/></svg><svg class="eye"><use href="#eye"/></svg></li>
                <li class="l2"><svg class="tri"><use href="#down"/></svg><svg class="ic"><use href="#empty"/></svg><em>BLD_00e2c2e2-5405-4073-8374-8223</em><svg class="eye"><use href="#eye"/></svg></li>
                <li class="l3"><svg class="tri"><use href="#right"/></svg><svg class="ic"><use href="#mesh"/></svg><em>surfaceMember.809</em><svg class="dat"><use href="#data"/></svg><svg class="eye"><use href="#eye"/></svg></li>
                <li class="l2"><svg class="tri"><use href="#down"/></svg><svg class="ic"><use href="#empty"/></svg><em>BLD_1f5bf9f0-870d-4199-9f02-04ef0c</em><svg class="eye"><use href="#eye"/></svg></li>
                <li class="l3"><svg class="tri"><use href="#right"/></svg><svg class="ic"><use href="#mesh"/></svg><em>surfaceMember.096</em><svg class="dat"><use href="#data"/></svg><svg class="eye"><use href="#eye"/></svg></li>
                <li class="l2"><svg class="tri"><use href="#down"/></svg><svg class="ic"><use href="#empty"/></svg><em>BLD_1f265551-6654-4496-a70a-4128</em><svg class="eye"><use href="#eye"/></svg></li>
                <li class="l3"><svg class="tri"><use href="#right"/></svg><svg class="ic"><use href="#mesh"/></svg><em>surfaceMember.322</em><svg class="dat"><use href="#data"/></svg><svg class="eye"><use href="#eye"/></svg></li>
                <li class="l2 hov"><svg class="tri"><use href="#down"/></svg><svg class="ic"><use href="#empty"/></svg><em>BLD_02e34dce-d63e-42f9-8992-0761</em><svg class="eye"><use href="#eye"/></svg></li>
                <li class="l3"><svg class="tri"><use href="#right"/></svg><svg class="ic"><use href="#mesh"/></svg><em>surfaceMember.084</em><svg class="dat"><use href="#data"/></svg><svg class="eye"><use href="#eye"/></svg></li>
                <li class="l2"><svg class="tri"><use href="#right"/></svg><svg class="ic"><use href="#empty"/></svg><em>BLD_2ef71e5e-e56f-443c-b834-91eec</em><svg class="eye"><use href="#eye"/></svg></li>
                <li class="l2"><svg class="tri"><use href="#right"/></svg><svg class="ic"><use href="#empty"/></svg><em>BLD_3cb4b5b3-80cf-474b-9933-f9f43</em><svg class="eye"><use href="#eye"/></svg></li>
                <li class="l2"><svg class="tri"><use href="#right"/></svg><svg class="ic"><use href="#empty"/></svg><em>BLD_3fba1412-eb7d-4a17-ae69-ed97</em><svg class="eye"><use href="#eye"/></svg></li>
                <li class="l2"><svg class="tri"><use href="#right"/></svg><svg class="ic"><use href="#empty"/></svg><em>BLD_04a7232e-793f-488b-b70a-7090</em><svg class="eye"><use href="#eye"/></svg></li>
                <li class="l2"><svg class="tri"><use href="#right"/></svg><svg class="ic"><use href="#empty"/></svg><em>BLD_5a97d1b5-b4e1-4908-97d5-a445</em><svg class="eye"><use href="#eye"/></svg></li>
                <li class="l2"><svg class="tri"><use href="#right"/></svg><svg class="ic"><use href="#empty"/></svg><em>BLD_5b3e8e5f-ba43-4be5-9a65-14ef7</em><svg class="eye"><use href="#eye"/></svg></li>
              </ul>
            </section>
            <section class="props">
              <header class="obar pbar"><span class="btn w36"><svg class="i18"><use href="#props"/></svg><svg class="i10"><use href="#chev"/></svg></span><span class="find pfind"><svg class="i18"><use href="#search"/></svg></span></header>
              <div class="pmain">
                <nav class="tabs">
                  <span><svg><use href="#tTool"/></svg></span>
                  <span class="gap"><svg><use href="#tRender"/></svg></span>
                  <span><svg><use href="#tOut"/></svg></span>
                  <span><svg><use href="#layers"/></svg></span>
                  <span><svg><use href="#tScene"/></svg></span>
                  <span class="red"><svg><use href="#tWorld"/></svg></span>
                  <span class="gap2"><svg><use href="#tColl"/></svg></span>
                  <span class="gap2 act orange"><svg><use href="#object"/></svg></span>
                  <span class="blue"><svg><use href="#tMod"/></svg></span>
                  <span class="blue"><svg><use href="#tPart"/></svg></span>
                  <span class="blue"><svg><use href="#tPhys"/></svg></span>
                  <span class="blue"><svg><use href="#tCons"/></svg></span>
                  <span class="green"><svg><use href="#data"/></svg></span>
                  <span class="red"><svg><use href="#tMat"/></svg></span>
                  <span class="gap red"><svg><use href="#tTex"/></svg></span>
                </nav>
                <div class="panel">
                  <div class="crumb"><svg><use href="#object"/></svg>surfaceMember.821</div>
                  <div class="name"><span class="pick"><svg class="i18"><use href="#object"/></svg><svg class="i10"><use href="#chev"/></svg></span><span class="val">surfaceMember.821</span></div>
                  <h3 class="sec open"><svg><use href="#down"/></svg>Transform</h3>
                  <div class="xform">
                    <div class="grp"><label>Location X</label><b>0 m</b><svg><use href="#lock"/></svg><label>Y</label><b>0 m</b><svg><use href="#lock"/></svg><label>Z</label><b>0 m</b><svg><use href="#lock"/></svg></div>
                    <div class="grp"><label>Rotation X</label><b>0°</b><svg><use href="#lock"/></svg><label>Y</label><b>0°</b><svg><use href="#lock"/></svg><label>Z</label><b>0°</b><svg><use href="#lock"/></svg></div>
                    <div class="grp mode"><label>Mode</label><span class="menu">XYZ Euler<svg class="i10"><use href="#chev"/></svg></span></div>
                    <div class="grp"><label>Scale X</label><b>1.000</b><svg><use href="#lock"/></svg><label>Y</label><b>1.000</b><svg><use href="#lock"/></svg><label>Z</label><b>1.000</b><svg><use href="#lock"/></svg></div>
                    <h4 class="sec sub"><svg><use href="#right"/></svg>Delta Transform</h4>
                  </div>
                  <h3 class="sec"><svg><use href="#right"/></svg>Relations</h3>
                  <h3 class="sec"><svg><use href="#right"/></svg>Collections</h3>
                  <h3 class="sec"><svg><use href="#right"/></svg>Instancing</h3>
                  <h3 class="sec"><svg><use href="#right"/></svg>Motion Paths</h3>
                  <h3 class="sec"><svg><use href="#right"/></svg>Visibility</h3>
                  <h3 class="sec"><svg><use href="#right"/></svg>Viewport Display</h3>
                  <h3 class="sec"><svg><use href="#right"/></svg>Line Art</h3>
                  <h3 class="sec"><svg><use href="#right"/></svg>Custom Properties</h3>
                </div>
              </div>
            </section>
          </div>
        </div>
        <footer class="status">Collection | surfaceMember.821 | Verts:3,089 | Faces:1,433 | Tris:1,433 | Objects:0/74 | 2.9</footer>
      </div>
    </div>
  </figure>

  <svg class="marks" viewBox="0 0 2996 1592">
    <g fill="none" stroke="#cc4a35" stroke-width="4"><rect x="1109" y="240" width="318" height="191"/><rect x="2675" y="237" width="239" height="35"/><rect x="1264" y="1538" width="83" height="30"/><rect x="2799" y="1540" width="83" height="35"/></g>
    <path d="M1426 248H2646V235L2675 263 2646 291V276H1426zM1374 1528.500H2732V1513L2760.500 1543 2732 1571V1556.500H1374z" fill="#ea3323"/>
  </svg>
  <p class="note note-mesh">メッシュ結合</p>
  <p class="note note-poly">ポリゴン数削減 <span>(2416→1433)</span></p>
</main>
</body>
</html>
```
FILE: styles.css
```css
* { box-sizing: border-box; margin: 0; padding: 0; }
body { background: #fff; width: 2996px; height: 1592px; overflow: hidden; font-family: "DejaVu Sans", sans-serif; font-size: 12.5px; color: #d6d6d6; }
ul { list-style: none; }
em { font-style: normal; }
b, h3, h4 { font-weight: normal; }
svg { display: block; flex: none; }
.defs { position: absolute; width: 0; height: 0; }

.slide { position: relative; display: flex; gap: 91px; width: 2996px; height: 1592px; padding-left: 22px; }
.shot { display: flex; flex-direction: column; width: 1436px; }
.shot-after { width: 1435px; }
.title { height: 142px; color: #000; text-align: center; white-space: nowrap; font: 350 62px/126px "Noto Sans CJK JP", sans-serif; padding-right: 78px; }
.shot-after .title { padding-right: 11px; }
.ang { font-size: 71px; line-height: 1; }
.open-a { margin-right: 4px; }
.close-a { margin-left: 4px; }
.lat { letter-spacing: 3.600px; }
.clip { height: 1427.500px; overflow: hidden; background: #1f1f20; }
.shot-after .clip { height: 1434.500px; }
.app { display: flex; flex-direction: column; width: 1438px; height: 1427.500px; padding-top: 2px; background: #1f1f20; transform-origin: 0 0; }
.shot-after .app { transform: translate(-8px, -4.900px) scale(1.0041, 1.0087); }
.work { display: flex; gap: 5px; height: 1400.600px; }
.left { display: flex; flex-direction: column; gap: 4.700px; width: 1054px; }
.right { display: flex; flex-direction: column; gap: 4.300px; width: 379px; }

.i18 { width: 17px; height: 17px; }
.i10 { width: 9px; height: 9px; }
.btn { display: flex; flex: none; align-items: center; justify-content: space-around; height: 21.500px; padding: 0 2px; border-radius: 4px; background: #28282a; color: #d8d8d8; overflow: hidden; box-shadow: 0 0 0 1px #363637; }
.cell { display: flex; flex: none; align-items: center; justify-content: center; width: 21.800px; height: 100%; border-right: 1px solid #3c3c3d; }
.lit { background: #545456; color: #a9a9a9; }
.on { background: #4f74b4; }
.dim { background: #353536; }
.faint { opacity: .25; }
.w22 { width: 22px; } .w35 { width: 35px; } .w36 { width: 36px; } .w45 { width: 45px; } .w59 { width: 59px; } .w60 { width: 60px; } .w112 { width: 112px; }
.w45, .w59, .w60, .w112 { padding-left: 0; justify-content: flex-start; }
.w45 .i10, .w112 .i10, .w59 .i10, .w60 .i10 { margin: 0 auto; }
.w59 > .i18, .w60 > .i18 { margin-left: 3px; }

.viewport { height: 1293px; border-radius: 8px; overflow: hidden; background: #3b3b3d; }
.bar { display: flex; justify-content: space-between; height: 29.600px; padding: 4px 9px 0 7.500px; background: #424243; }
.btns { display: flex; gap: 8px; }
.options { width: 75px; font-size: 13.200px; padding: 0 3px 0 7px; }
.canvas { position: relative; height: 1263.400px; }
.scene { width: 1054px; height: 1263.400px; }
.scene polygon, .scene path, #town polygon, #grid path { vector-effect: non-scaling-stroke; }
#grid { stroke-width: 1.300; }
.wire { stroke: #2a2e33; stroke-width: 1.200; }
.plain { stroke-width: 1.100; }
.wire .select { fill: none; stroke: #f09a3a; stroke-width: 2.200; }
.tools { position: absolute; top: 4.500px; right: 9px; display: flex; gap: 8.500px; }
.gizmo { position: absolute; left: 738px; top: -33.600px; width: 320px; height: 320px; pointer-events: none; }
.axis { font: bold 28px "DejaVu Sans", sans-serif; text-anchor: middle; fill: #17202a; }

.timeline { height: 103px; border-radius: 8px; overflow: hidden; background: #303031; }
.tbar { display: flex; align-items: center; height: 29.900px; padding: 0 9px 3px 0; background: #39393a; }
.play { width: 138px; height: 21.500px; margin-right: auto; border-radius: 0 4px 4px 0; overflow: hidden; fill: #e4e4e4; background: repeating-linear-gradient(90deg, #545456 0 22.600px, #39393a 22.600px 23.500px) -3px 0 / 164.500px 100% #545456; }
.play svg { width: 138px; height: 21.500px; }
.frame { width: 87px; height: 21.500px; line-height: 22px; border-radius: 4px; background: #545456; text-align: center; }
.range { display: flex; height: 21.500px; margin-left: 7.500px; border-radius: 4px; overflow: hidden; }
.clock { width: 23px; padding: 2px 3px; background: #2b2b2d; }
.num { display: flex; justify-content: space-between; line-height: 22px; background: #545456; }
.start { width: 106px; padding: 0 16px 0 19px; border-right: 1px solid #3e3e40; }
.end { width: 101px; padding: 0 15px 0 19px; }
.ruler { display: flex; height: 25.800px; line-height: 29px; margin-left: -24px; background: #28282a; color: #a5a5a5; font-size: 12.500px; }
.ruler span { flex: none; width: 74.380px; text-align: center; }
.track { height: 47.500px; }
.frames { width: 980px; height: 34.500px; border-right: 1px solid #111; background: repeating-linear-gradient(90deg, #2a2a2b 0 1px, transparent 1px 37.190px, #383839 37.190px 38.190px, transparent 38.190px 74.380px) 13px 0 / 1040px 100%, #404041; }
.scroll { display: flex; justify-content: flex-end; width: 1045px; height: 11px; padding: 1px; border-radius: 0 6px 6px 0; background: #656567; }
.scroll i { width: 9px; height: 9px; border-radius: 50%; border: 2px solid #39393a; background: #555; }

.outliner { height: 447.700px; border-radius: 8px 0 0 8px; overflow: hidden; background: #282829; }
.obar { display: flex; align-items: center; height: 28.700px; background: #3e3e40; padding-left: 9.500px; gap: 8px; }
.find { display: flex; align-items: center; width: 135px; height: 21px; margin-left: 30.500px; padding-left: 4px; border-radius: 4px; background: #1c1c1e; box-shadow: 0 0 0 1px #353536; color: #e0e0e0; }
.funnel { width: 45px; margin-left: auto; margin-right: -8px; padding: 0 9px 0 1px; }
.rows { padding-top: 1.500px; }
.rows li { display: flex; align-items: center; height: 23.620px; padding-left: 22px; }
.rows li:nth-child(even) { background-color: #2d2d2e; }
.rows .l2 { padding-left: 45.700px; background-image: linear-gradient(#666, #666); background-size: 1px 100%; background-position: 33px 0; background-repeat: no-repeat; }
.rows .l3 { padding-left: 69.300px; background-image: linear-gradient(#666, #666), linear-gradient(transparent 50%, #666 50%); background-size: 1px 100%, 1px 11.800px; background-position: 33px 0, 57px 0; background-repeat: no-repeat, repeat-y; }
.rows li.sel { background-color: #395487; }
.rows li.hov { background-color: #424243; }
.rows em { overflow: hidden; white-space: nowrap; margin-left: 5px; line-height: 23px; padding-top: 2px; color: #c6c6c6; }
.rows .l2 em { width: 238.500px; flex: none; font-size: 12.700px; }
.rows .l3 em { width: 145px; flex: none; }
.rows .sel em { color: #e0a55c; }
.tri { width: 8px; height: 8px; margin: 0 8px; color: #c9c9c9; }
.ic { width: 17px; height: 16px; margin: 0 3.500px; color: #d5d5d5; }
.halo { width: 24px; height: 21px; padding-top: 2.500px; border-radius: 5px; background: #59595b; }
.sel .halo { background: #6c7ca0; }
.dat { width: 17px; height: 17px; margin-left: 7px; color: #3fae86; }
.sel .dat { color: #45b7c5; }
.eye { width: 18px; height: 13px; margin-left: auto; margin-right: -4px; color: #d5d5d5; }
.l2 .eye, .l3 .eye { margin-bottom: 3px; }
.chk { width: 12px; height: 12px; margin-left: auto; }
.chk + .eye { margin-left: 10px; margin-bottom: 2px; }

.props { flex: 1; display: flex; flex-direction: column; border-radius: 8px 0 0 8px; overflow: hidden; background: #212122; }
.pfind { margin-left: 89.500px; }
.pmain { display: flex; flex: 1; }
.tabs { flex: none; width: 33px; padding: 11.500px 0 0 2px; background: #212122; }
.tabs span { display: flex; align-items: center; justify-content: center; height: 30.500px; margin-bottom: 2.500px; border-radius: 4px 0 0 4px; background: #2c2c2d; color: #cdcdcd; }
.tabs svg { width: 17px; height: 17px; }
.tabs .gap { margin-top: 11.500px; } .tabs .gap2 { margin-top: 12.500px; }
.tabs .act { background: #424243; } .tabs .orange { color: #e5924c; } .tabs .blue { color: #7095cf; } .tabs .green { color: #3fae86; } .tabs .red { color: #c05a68; }
.panel { flex: 1; min-width: 0; overflow: hidden; background: #424243; }
.crumb { display: flex; align-items: center; gap: 10.500px; height: 43px; padding-left: 12.500px; }
.crumb svg { width: 17px; height: 17px; }
.name { display: flex; height: 21.500px; margin: 10px 0 10px 10.500px; border-radius: 4px 0 0 4px; overflow: hidden; background: #1c1c1e; }
.pick { display: flex; align-items: center; justify-content: space-around; width: 36.500px; padding: 0 2px; background: #29292b; border-right: 1px solid #3c3c3d; }
.val { padding-left: 8px; line-height: 21px; }
.sec { display: flex; align-items: center; height: 28.300px; padding: 2px 0 0 9.500px; font-size: 13.400px; color: #d0d0d0; }
.sec svg { width: 9px; height: 8px; margin-right: 8px; margin-bottom: 1px; color: #a8a8a8; }
.open { height: 29.500px; font-size: 13px; }
.xform { height: 300.900px; padding-top: 10px; background: #38383a; }
.grp { display: grid; grid-template-columns: 140.500px 176px 17px; column-gap: 12px; row-gap: 1px; margin-bottom: 8px; border-radius: 4px; align-items: center; }
.grp label { text-align: right; }
.grp b { height: 22.300px; line-height: 21px; background: #545456; text-align: center; }
.grp b:nth-of-type(1) { border-radius: 4px 4px 0 0; }
.grp b:nth-of-type(3) { border-radius: 0 0 4px 4px; }
.grp svg { width: 15px; height: 15px; color: #999; margin-left: -9px; }
.menu { display: flex; align-items: center; justify-content: space-between; height: 21.500px; padding: 0 3px 0 9px; border-radius: 4px; background: #28282a; }
.menu svg { margin: 0; color: #ddd; }
.sub { padding-left: 26px; font-size: 12.300px; margin-top: 10px; }

.status { height: 21px; margin-top: 3.900px; padding-left: 874px; line-height: 20px; white-space: nowrap; background: #303031; color: #a6a6a6; }
.shot-after .status { padding-left: 870px; }

.marks { position: absolute; left: 0; top: 0; width: 2996px; height: 1592px; }
.note { position: absolute; background: #fff; color: #000; text-align: center; white-space: nowrap; font: 350 62px/80px "Noto Sans CJK JP", sans-serif; }
.note-mesh { left: 1866px; top: 142px; width: 426px; height: 100px; }
.note-poly { left: 1682px; top: 1417px; width: 896px; height: 100px; padding-top: 1px; }
.note-poly span { margin-left: 6px; letter-spacing: .8px; }
```
